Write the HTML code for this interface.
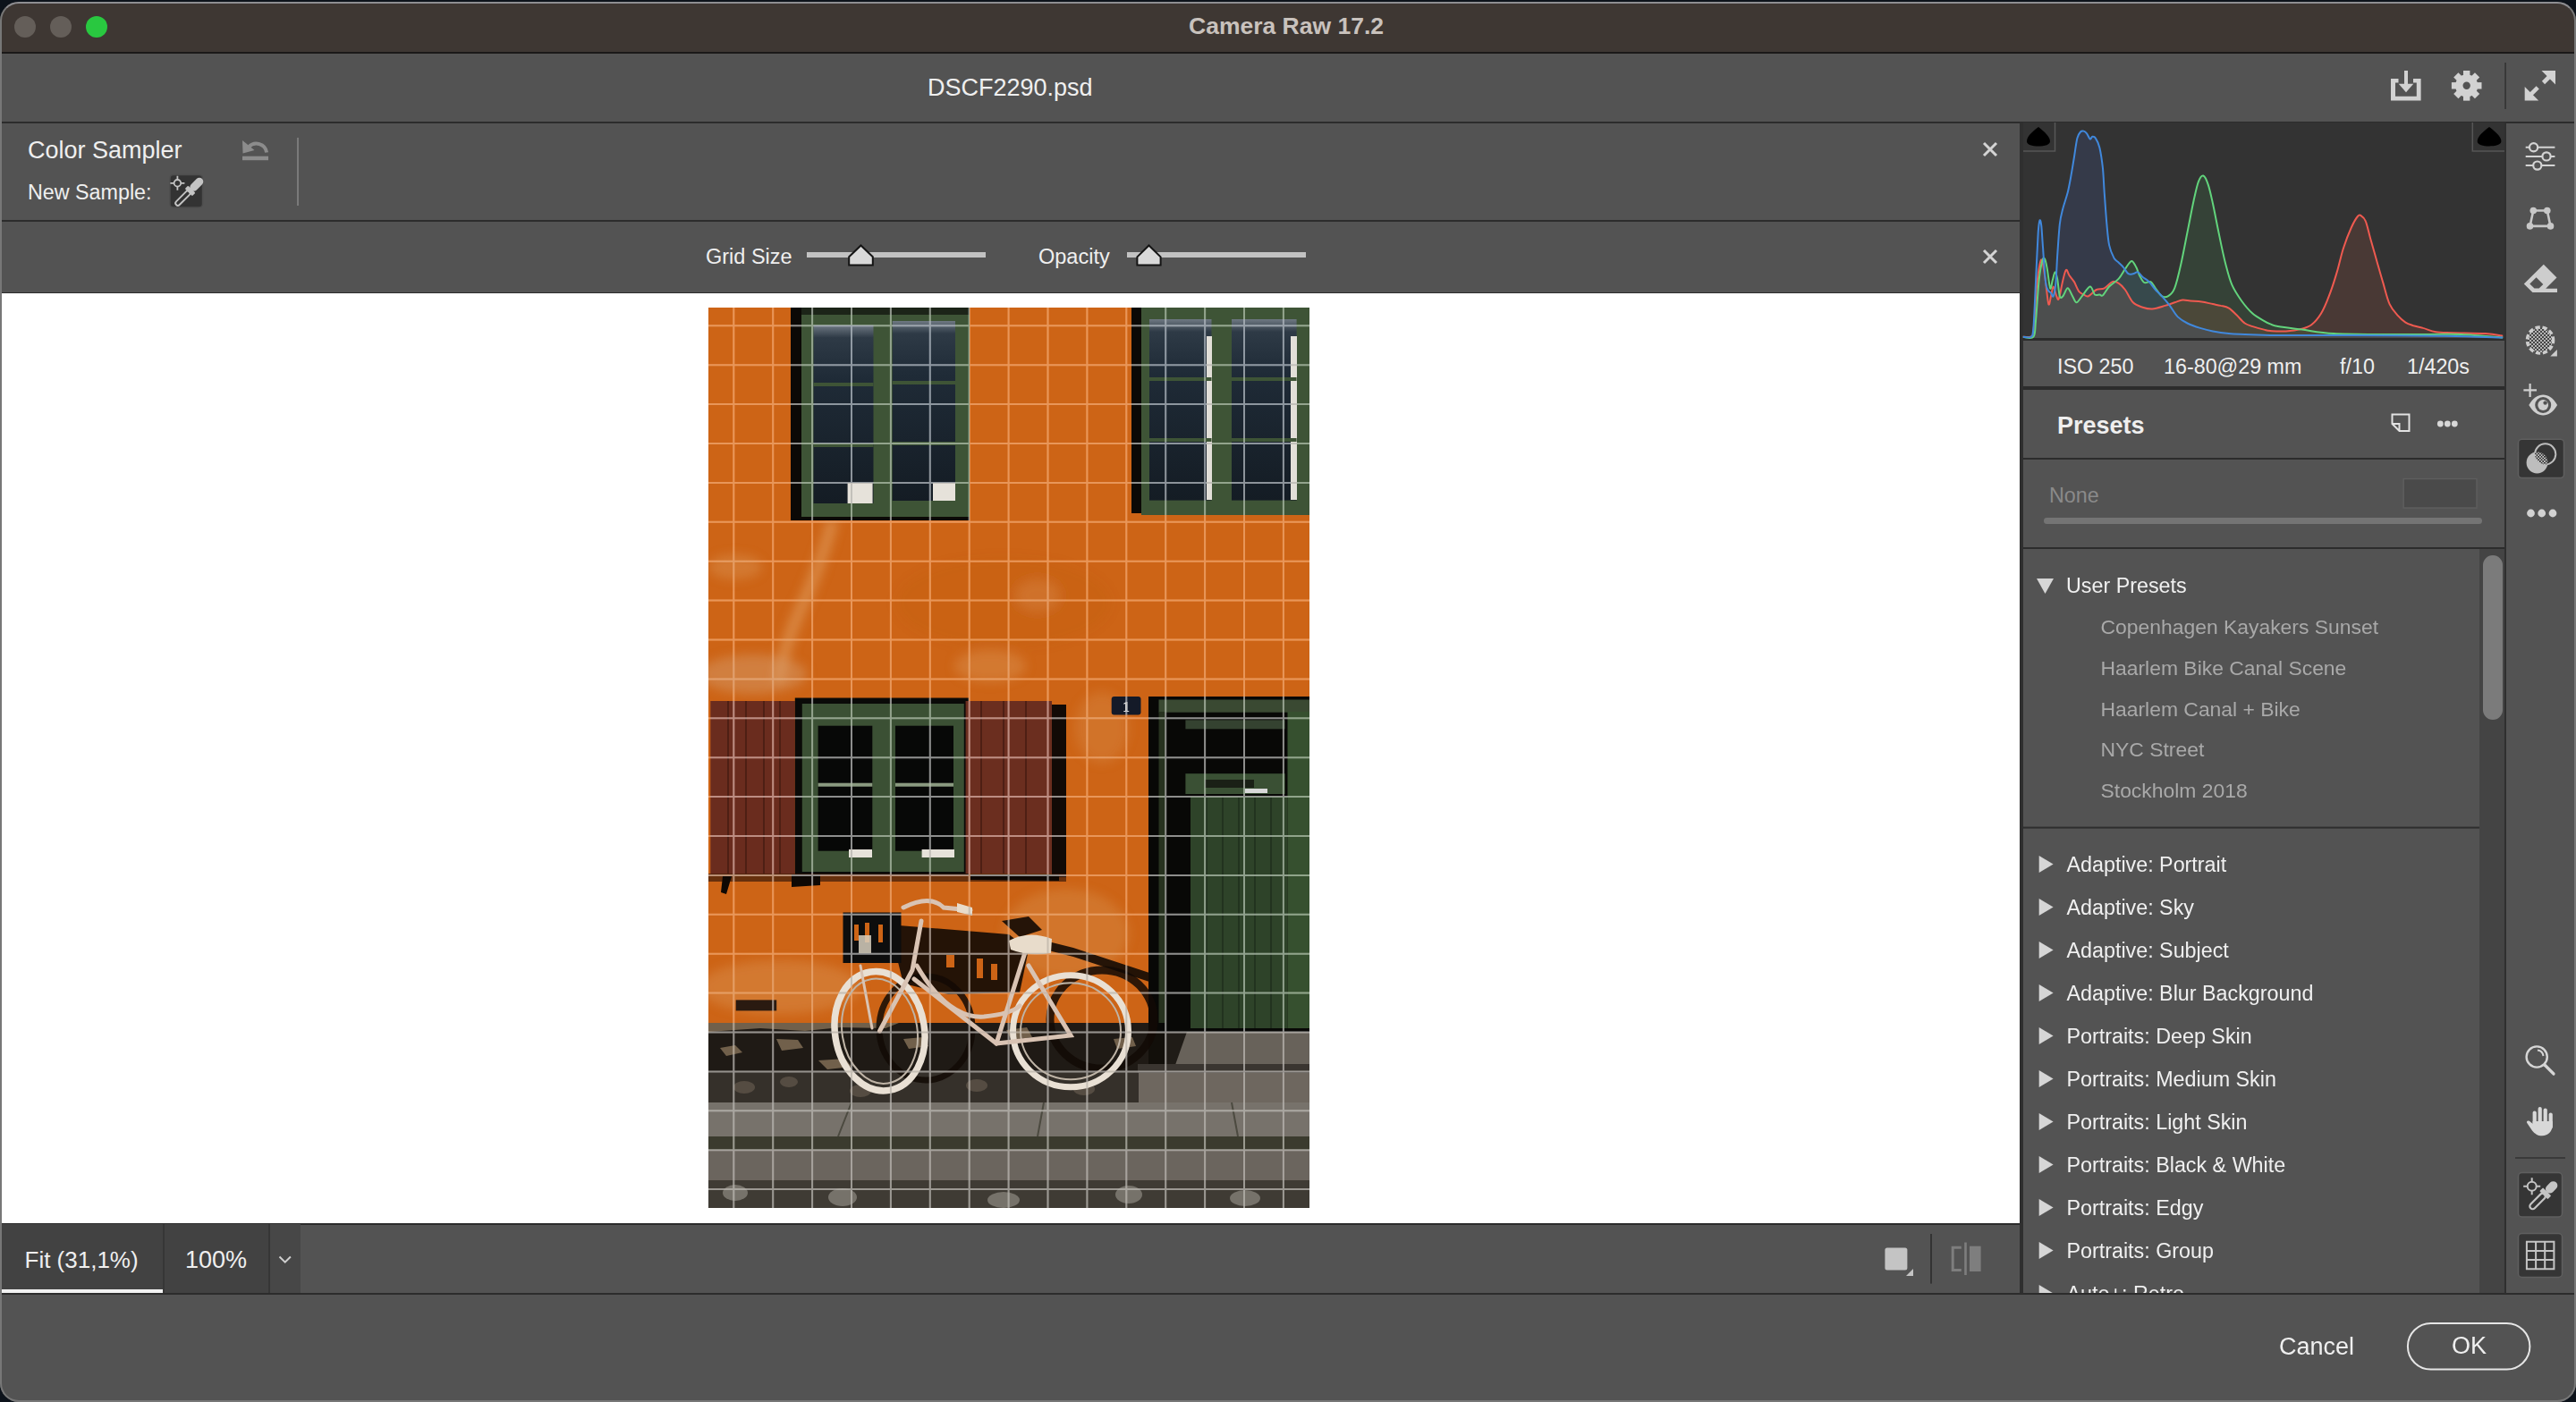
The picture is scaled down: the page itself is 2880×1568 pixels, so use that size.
<!DOCTYPE html>
<html><head><meta charset="utf-8">
<style>
*{box-sizing:border-box;margin:0;padding:0}
html,body{width:2880px;height:1568px;overflow:hidden;background:#535353;font-family:"Liberation Sans",sans-serif;position:relative}
.a{position:absolute}
.t{position:absolute;white-space:pre;line-height:1;color:#efefef}
#frame{position:absolute;left:0;top:2px;width:2880px;height:1566px;border-radius:21px;border:2px solid #777;border-top-color:#8e8e92;box-shadow:0 0 0 80px #0d131b;z-index:50;pointer-events:none}
.ln{position:absolute;background:#2c2c2c}
.ps{font-size:23.3px;color:#f0f0f0}
.pu{font-size:22.9px;color:#a9a9a9}
</style></head><body>
<!-- title bar -->
<div class="a" style="left:0;top:0;width:2880px;height:58px;background:#3e3733"></div>
<div class="a" style="left:0;top:58px;width:2880px;height:1.5px;background:#1b1918"></div>
<div class="a" style="left:16px;top:18px;width:24px;height:24px;border-radius:50%;background:#645e59"></div>
<div class="a" style="left:56px;top:18px;width:24px;height:24px;border-radius:50%;background:#645e59"></div>
<div class="a" style="left:96px;top:18px;width:24px;height:24px;border-radius:50%;background:#29c840"></div>
<div class="t" style="left:1329px;top:15.8px;font-size:26.5px;font-weight:700;color:#c9c2bd">Camera Raw 17.2</div>

<!-- header bar -->
<div class="ln" style="left:0;top:136px;width:2880px;height:1.5px"></div>
<div class="t" style="left:1037px;top:85px;font-size:27px">DSCF2290.psd</div>

<!-- color sampler bar -->
<div class="ln" style="left:0;top:246px;width:2258px;height:1.5px"></div>
<div class="t" style="left:31px;top:155px;font-size:27px">Color Sampler</div>
<div class="t" style="left:31px;top:204px;font-size:23.3px">New Sample:</div>
<div class="a" style="left:332px;top:154px;width:2px;height:76px;background:#7a7a7a"></div>

<!-- grid bar -->
<div class="ln" style="left:0;top:327px;width:2258px;height:1px"></div>
<div class="t" style="left:789px;top:276px;font-size:23.5px">Grid Size</div>
<div class="t" style="left:1161px;top:276px;font-size:23.5px">Opacity</div>

<!-- canvas -->
<div class="a" style="left:0;top:328px;width:2258px;height:1040px;background:#fff"></div>
<div class="ln" style="left:0;top:1368px;width:2258px;height:1.5px"></div>

<!-- zoom bar -->
<div class="ln" style="left:0;top:1446px;width:2880px;height:1.5px"></div>
<div class="a" style="left:2px;top:1369px;width:180px;height:77px;background:#424242"></div>
<div class="a" style="left:2px;top:1442px;width:180px;height:4px;background:#f2f2f2"></div>
<div class="a" style="left:182px;top:1369px;width:2px;height:77px;background:#363636"></div>
<div class="a" style="left:184px;top:1369px;width:116px;height:77px;background:#424242"></div>
<div class="a" style="left:300px;top:1369px;width:2px;height:77px;background:#363636"></div>
<div class="a" style="left:302px;top:1369px;width:34px;height:77px;background:#474747"></div>
<div class="t" style="left:27.5px;top:1396px;font-size:26px">Fit (31,1%)</div>
<div class="t" style="left:207px;top:1396px;font-size:27px">100%</div>

<!-- right panel separators -->
<div class="a" style="left:2258px;top:137px;width:4px;height:1310px;background:#2f2f2f"></div>
<div class="a" style="left:2800px;top:137px;width:2px;height:1310px;background:#2f2f2f"></div>

<!-- histogram -->
<div class="a" style="left:2262px;top:137px;width:538px;height:241px;background:#333"></div>
<div class="ln" style="left:2262px;top:378px;width:538px;height:3px"></div>
<div class="ln" style="left:2262px;top:432px;width:538px;height:4px"></div>
<div class="t" style="left:2300px;top:399px;font-size:23.3px">ISO 250</div>
<div class="t" style="left:2419px;top:399px;font-size:23.3px">16-80@29 mm</div>
<div class="t" style="left:2616px;top:399px;font-size:23.3px">f/10</div>
<div class="t" style="left:2691px;top:399px;font-size:23.3px">1/420s</div>

<!-- presets -->
<div class="t" style="left:2300px;top:462.5px;font-size:27px;font-weight:700">Presets</div>
<div class="ln" style="left:2262px;top:512px;width:538px;height:2px"></div>
<div class="t" style="left:2291px;top:543px;font-size:23.3px;color:#8a8a8a">None</div>
<div class="ln" style="left:2262px;top:612px;width:538px;height:2px"></div>

<!--PHOTO-->
<svg class="a" style="left:792px;top:344px" width="672" height="1007" viewBox="0 0 672 1007">
<defs>
<radialGradient id="lp" cx="0.5" cy="0.5" r="0.5"><stop offset="0" stop-color="#e0a060" stop-opacity="0.55"/><stop offset="1" stop-color="#e0a060" stop-opacity="0"/></radialGradient>
<radialGradient id="dp" cx="0.5" cy="0.5" r="0.5"><stop offset="0" stop-color="#9a4a10" stop-opacity="0.35"/><stop offset="1" stop-color="#9a4a10" stop-opacity="0"/></radialGradient>
<filter id="bl" x="-50%" y="-50%" width="200%" height="200%"><feGaussianBlur stdDeviation="6"/></filter>
<linearGradient id="glass" x1="0" y1="0" x2="0" y2="1"><stop offset="0" stop-color="#6e7882"/><stop offset="0.07" stop-color="#2e3a46"/><stop offset="0.3" stop-color="#1f2b37"/><stop offset="1" stop-color="#141c24"/></linearGradient>
</defs>
<!-- wall -->
<rect width="672" height="1007" fill="#cd6416"/>
<g filter="url(#bl)">
<path d="M139 238Q125 290 104 335Q84 378 78 420" stroke="#e4a468" stroke-width="13" fill="none" opacity="0.55"/>
<ellipse cx="30" cy="290" rx="30" ry="14" fill="#e0a064" opacity="0.35"/>
<ellipse cx="80" cy="760" rx="90" ry="30" fill="#e0a064" opacity="0.35"/>
<ellipse cx="400" cy="700" rx="70" ry="50" fill="#e0a064" opacity="0.28"/>
<ellipse cx="440" cy="470" rx="30" ry="40" fill="#e0a064" opacity="0.25"/>
<ellipse cx="50" cy="410" rx="60" ry="22" fill="#d8a070" opacity="0.45"/>
<ellipse cx="315" cy="401" rx="40" ry="18" fill="#e0a064" opacity="0.35"/>
<ellipse cx="368" cy="322" rx="25" ry="18" fill="#e0a064" opacity="0.3"/>
<ellipse cx="330" cy="330" rx="120" ry="50" fill="#b2520e" opacity="0.12"/>
</g>
<!-- top window 1 -->
<rect x="92" y="0" width="200" height="238" fill="#0b0906"/>
<rect x="104" y="0" width="188" height="234" fill="#3e5436"/>
<rect x="117.5" y="19.7" width="67" height="199.3" fill="url(#glass)"/>
<rect x="205.7" y="15" width="70.3" height="201" fill="url(#glass)"/>
<rect x="117.5" y="84" width="67" height="4" fill="#3e5436"/>
<rect x="117.5" y="152" width="67" height="4" fill="#3e5436"/>
<rect x="205.7" y="82" width="70.3" height="4" fill="#3e5436"/>
<rect x="205.7" y="150" width="70.3" height="4" fill="#3e5436"/>
<rect x="155.6" y="196" width="28" height="23" fill="#e6e2da"/>
<rect x="251" y="196" width="25" height="20" fill="#e6e2da"/>
<rect x="104" y="0" width="188" height="8" fill="#1c2418"/>
<!-- top window 2 -->
<rect x="473" y="0" width="199" height="230" fill="#0b0906"/>
<rect x="484" y="0" width="188" height="232" fill="#3e5436"/>
<rect x="493" y="13" width="69.5" height="202.6" fill="url(#glass)"/>
<rect x="585" y="13" width="72.6" height="202.6" fill="url(#glass)"/>
<rect x="557" y="32" width="6" height="183" fill="#e2dfd8"/>
<rect x="651" y="32" width="7" height="183" fill="#e2dfd8"/>
<rect x="493" y="78" width="69.5" height="4" fill="#3e5436"/>
<rect x="493" y="146" width="69.5" height="4" fill="#3e5436"/>
<rect x="585" y="78" width="72.6" height="4" fill="#3e5436"/>
<rect x="585" y="146" width="72.6" height="4" fill="#3e5436"/>
<!-- middle window -->
<rect x="2.3" y="440" width="94.5" height="193.6" fill="#6a2c1e"/>
<path d="M22 440V633M42 440V633M62 440V633M80 440V633" stroke="#4e1f14" stroke-width="2"/>
<rect x="96.8" y="436.5" width="194.2" height="198.5" fill="#0a0a08"/>
<rect x="104.8" y="443" width="181" height="188" fill="#3b5034"/>
<rect x="122.6" y="467.7" width="60.7" height="140" fill="#070807"/>
<rect x="209" y="467.7" width="65" height="140" fill="#070807"/>
<rect x="122.6" y="531.7" width="60.7" height="4" fill="#8a9a80"/>
<rect x="209" y="531.7" width="65" height="4" fill="#8a9a80"/>
<rect x="157" y="606" width="26" height="9" fill="#e6e2da"/>
<rect x="238.6" y="606" width="36.4" height="9" fill="#e6e2da"/>
<rect x="287.6" y="440" width="96.4" height="193" fill="#6b2e1f"/>
<path d="M305 440V633M330 440V633M355 440V633" stroke="#4e1f14" stroke-width="2"/>
<path d="M384 444H400V637H384Z" fill="#120a06"/>
<path d="M0 633H400V642H0Z" fill="#3a1a0a" opacity="0.7"/>
<!-- plaque -->
<rect x="450.7" y="435" width="32.8" height="20.6" rx="3" fill="#141a28"/>
<text x="467" y="452" font-family="Liberation Serif" font-weight="700" font-size="16" fill="#f2f2f2" text-anchor="middle">1</text>
<!-- door -->
<rect x="492" y="435" width="180" height="405" fill="#080806"/>
<rect x="503.5" y="438.5" width="168.5" height="14.2" fill="#3a4932"/>
<rect x="503.5" y="452" width="7" height="354" fill="#27321f"/>
<rect x="533.4" y="461.3" width="111.2" height="10" fill="#344230"/>
<rect x="533.4" y="521.2" width="111.2" height="22.8" fill="#3a5034"/>
<rect x="555" y="528" width="55" height="9" fill="#1a2016"/>
<rect x="539" y="547" width="108.5" height="259" fill="#2e4329"/>
<path d="M557 547V806M575 547V806M593 547V806M611 547V806M629 547V806" stroke="#22331f" stroke-width="2"/>
<rect x="647.5" y="452" width="24.5" height="354" fill="#36502f"/>
<rect x="600" y="538" width="25" height="5" fill="#d8d8d8"/>
<!-- base -->
<path d="M93.0 634.0 125.0 634.0 125.0 646.0 93.0 648.0Z M293.0 634.0 392.0 634.0 392.0 641.0 293.0 640.0Z M16.0 636.0 26.0 636.0 20.0 656.0 14.0 654.0Z" fill="#0e0804"/>
<rect x="30.7" y="774.4" width="45.5" height="12" fill="#2a1a10"/>

<rect x="0" y="800" width="492" height="59" fill="#1f1a15"/>
<g fill="#a89070" opacity="0.6">
 <path d="M0.0 800.0 213.0 800.0 198.0 806.0 148.0 805.0 108.0 809.0 58.0 806.0 0.0 810.0Z"/>
 <path d="M13.0 828.0 30.0 825.0 38.0 833.0 20.0 837.0Z"/>
 <path d="M76.0 818.0 100.0 819.0 106.0 828.0 82.0 831.0Z"/>
 <path d="M123.0 842.0 153.0 840.0 160.0 849.0 133.0 852.0Z"/>
 <path d="M218.0 818.0 240.0 816.0 246.0 826.0 224.0 829.0Z"/>
 <path d="M333.0 808.0 356.0 805.0 362.0 816.0 339.0 819.0Z"/>
 <path d="M453.0 818.0 474.0 816.0 478.0 826.0 457.0 829.0Z"/>
</g>
<rect x="492" y="800" width="36" height="50" fill="#080806"/>
<rect x="511" y="810" width="161" height="37.5" fill="#68625a"/><path d="M492 810H535L522 847H492Z" fill="#14100c" opacity="0.85"/><rect x="480" y="846" width="192" height="11" fill="#3a3530"/>
<rect x="480" y="856" width="192" height="34" fill="#6e675f"/>
<rect x="0" y="855.5" width="481" height="34" fill="#35302a"/>
<g fill="#5e5448" opacity="0.8"><ellipse cx="40" cy="872" rx="12" ry="7"/><ellipse cx="90" cy="866" rx="10" ry="6"/><ellipse cx="170" cy="876" rx="12" ry="7"/><ellipse cx="300" cy="870" rx="12" ry="7"/><ellipse cx="420" cy="874" rx="12" ry="7"/></g>
<rect x="0" y="889" width="672" height="38.5" fill="#77726b"/>
<path d="M160 889L145 927M375 889L368 927M585 889L592 927" stroke="#4c4a40" stroke-width="2"/>
<rect x="0" y="927" width="672" height="15.5" fill="#3b3b2e"/>
<rect x="0" y="942" width="672" height="34.5" fill="#6b655e"/>
<rect x="0" y="976" width="672" height="31" fill="#3f3b34"/>
<g fill="#76726a"><ellipse cx="30" cy="990" rx="14" ry="9"/><ellipse cx="150" cy="995" rx="16" ry="10"/><ellipse cx="330" cy="998" rx="18" ry="9"/><ellipse cx="470" cy="992" rx="15" ry="10"/><ellipse cx="600" cy="996" rx="17" ry="9"/></g>
<!-- bike shadow -->
<g fill="#120a05" opacity="0.9">
 <path d="M213.0 691.0 336.0 701.0 358.0 718.0 348.0 766.0 268.0 768.0 218.0 756.0 208.0 716.0Z"/>
 <path d="M348.0 701.0 408.0 716.0 493.0 744.0 493.0 754.0 408.0 726.0 348.0 711.0Z"/>
 <path d="M328.0 686.0 358.0 681.0 373.0 696.0 348.0 704.0Z"/>
</g>
<g fill="#cd6416"><rect x="266" y="724" width="9" height="14"/><rect x="300" y="728" width="7" height="22"/><rect x="316" y="734" width="7" height="18"/></g>
<g fill="none" stroke="#120a05" opacity="0.85">
 <ellipse cx="440" cy="796" rx="58" ry="55" stroke-width="9"/>
 <ellipse cx="243" cy="806" rx="52" ry="58" stroke-width="7"/>
</g>
<!-- bike -->
<g fill="none">
 <ellipse cx="191.5" cy="809.2" rx="50" ry="67" stroke="#e9e0d4" stroke-width="7.5" transform="rotate(-9 191.5 809.2)"/>
 <ellipse cx="191.5" cy="809.2" rx="42" ry="59" stroke="#bfb4a6" stroke-width="2" transform="rotate(-9 191.5 809.2)"/>
 <ellipse cx="405" cy="809.3" rx="64.5" ry="62.5" stroke="#e9e0d4" stroke-width="7"/>
 <ellipse cx="405" cy="809.3" rx="56" ry="54" stroke="#bfb4a6" stroke-width="2"/>
</g>
<g fill="none" stroke="#d9c3b3" stroke-width="5" stroke-linecap="round">
 <path d="M238.0 686.0 228.0 741.0 191.5 809.0"/>
 <path d="M233.0 736.0 Q268.0 796.0 308.0 793.0 Q338.0 790.0 348.0 781.0"/>
 <path d="M230.0 751.0 322.0 823.0"/>
 <path d="M322.0 823.0 355.0 718.0"/>
 <path d="M322.0 823.0 405.0 814.0 358.0 736.0"/>
 <path d="M218.0 671.0 Q248.0 656.0 263.0 671.0 L293.0 674.0"/>
 <path d="M170.0 736.0 183.0 806.0" stroke-width="3"/>
</g>
<path d="M278.0 666.0 295.0 671.0 295.0 680.0 278.0 676.0Z" fill="#e8dccb"/>
<path d="M336.0 708.0 Q358.0 696.0 384.0 706.0 L383.0 722.0 Q358.0 726.0 338.0 718.0Z" fill="#e8dccb"/>
<rect x="150.5" y="676.5" width="65" height="56.5" fill="#0d0d0d"/>
<g fill="#cd6416"><rect x="163" y="690" width="5" height="18"/><rect x="175" y="688" width="5" height="22"/><rect x="190" y="690" width="5" height="20"/></g>
<rect x="168" y="702" width="14" height="20" fill="#d8d0c0" opacity="0.85"/>
<!-- grid -->
<path d="M28.3 0V1007 M72.2 0V1007 M116.1 0V1007 M160.0 0V1007 M203.9 0V1007 M247.8 0V1007 M291.7 0V1007 M335.6 0V1007 M379.5 0V1007 M423.4 0V1007 M467.3 0V1007 M511.2 0V1007 M555.1 0V1007 M599.0 0V1007 M642.9 0V1007 M0 20.3H672 M0 64.2H672 M0 108.1H672 M0 152.0H672 M0 195.9H672 M0 239.8H672 M0 283.7H672 M0 327.6H672 M0 371.5H672 M0 415.4H672 M0 459.3H672 M0 503.2H672 M0 547.1H672 M0 591.0H672 M0 634.9H672 M0 678.8H672 M0 722.7H672 M0 766.6H672 M0 810.5H672 M0 854.4H672 M0 898.3H672 M0 942.2H672 M0 986.1H672" stroke="rgba(255,255,255,0.22)" stroke-width="2" fill="none"/>
<path d="M28.3 0V1007 M72.2 0V1007 M116.1 0V1007 M160.0 0V1007 M203.9 0V1007 M247.8 0V1007 M291.7 0V1007 M335.6 0V1007 M379.5 0V1007 M423.4 0V1007 M467.3 0V1007 M511.2 0V1007 M555.1 0V1007 M599.0 0V1007 M642.9 0V1007 M0 20.3H672 M0 64.2H672 M0 108.1H672 M0 152.0H672 M0 195.9H672 M0 239.8H672 M0 283.7H672 M0 327.6H672 M0 371.5H672 M0 415.4H672 M0 459.3H672 M0 503.2H672 M0 547.1H672 M0 591.0H672 M0 634.9H672 M0 678.8H672 M0 722.7H672 M0 766.6H672 M0 810.5H672 M0 854.4H672 M0 898.3H672 M0 942.2H672 M0 986.1H672" stroke="rgb(175,175,175)" stroke-opacity="0.7" stroke-width="2" fill="none" style="mix-blend-mode:luminosity"/>
</svg>
<!--/PHOTO-->
<!--SVG1-->
<svg class="a" style="left:0;top:0" width="2880" height="1568" viewBox="0 0 2880 1568">
<defs>
<pattern id="chk" width="4" height="4" patternUnits="userSpaceOnUse"><rect width="4" height="4" fill="#222"/><rect width="2" height="2" fill="#d0d0d0"/><rect x="2" y="2" width="2" height="2" fill="#d0d0d0"/></pattern>
<pattern id="chk2" width="3.4" height="3.4" patternUnits="userSpaceOnUse"><rect width="3.4" height="3.4" fill="#3a3a3a"/><rect width="1.7" height="1.7" fill="#c8c8c8"/><rect x="1.7" y="1.7" width="1.7" height="1.7" fill="#c8c8c8"/></pattern>
</defs>
<!-- header icons -->
<g fill="#d2d2d2">
 <path d="M2673 88H2681.5V92.5H2678V107.8H2701.8V92.5H2698V88H2706.6V112.4H2673Z"/>
 <rect x="2688" y="79" width="4" height="16"/>
 <path d="M2681.7 93.8H2698.3L2690 103.2Z"/>
 <g transform="translate(2757.7 95.8)"><circle r="12.6"/><rect x="-3.7" y="-16.8" width="7.4" height="33.6"/><rect x="-3.7" y="-16.8" width="7.4" height="33.6" transform="rotate(45)"/><rect x="-3.7" y="-16.8" width="7.4" height="33.6" transform="rotate(90)"/><rect x="-3.7" y="-16.8" width="7.4" height="33.6" transform="rotate(135)"/><circle r="4.2" fill="#535353"/></g>
 <path d="M2857 79V94.5L2841.5 79Z"/><path d="M2851 85L2843.5 92.5" stroke="#d2d2d2" stroke-width="4.6"/>
 <path d="M2822.7 112.4V96.9L2838.2 112.4Z"/><path d="M2828.7 106.4L2837.2 97.9" stroke="#d2d2d2" stroke-width="4.6"/>
</g>
<rect x="2800.3" y="70" width="1.6" height="52" fill="#333"/>
<!-- undo icon -->
<path d="M278 164.5A11.6 11.6 0 0 1 298.1 170.5" fill="none" stroke="#8c8c8c" stroke-width="4"/>
<path d="M271 157L271.5 171.5L284.5 168Z" fill="#8c8c8c"/>
<rect x="271" y="174.7" width="29" height="4.5" fill="#8c8c8c"/>
<!-- eyedropper box -->
<rect x="190" y="195.5" width="36.5" height="36.5" rx="4" fill="#333" stroke="#4e4e4e" stroke-width="1.5"/>
<g stroke="#c4c4c4" fill="none" stroke-width="1.8">
 <circle cx="198.4" cy="204.8" r="3.8"/>
 <path d="M198.4 196.8V200.5M198.4 209.1V212.8M190.4 204.8H194.1M202.7 204.8H206.4"/>
</g>
<g transform="translate(211.5 214.5) rotate(-45)">
 <rect x="-20.5" y="-2.6" width="21" height="5.2" rx="2.6" fill="none" stroke="#c4c4c4" stroke-width="1.9"/>
 <rect x="-1" y="-5.8" width="5" height="11.6" rx="1" fill="#c4c4c4"/>
 <rect x="3" y="-4.4" width="17.5" height="8.8" rx="4.4" fill="#c4c4c4"/>
</g>
<!-- sliders -->
<rect x="902" y="282" width="200" height="6" fill="#c2c2c2"/>
<path d="M962.5 274.5L975.8 287.3V296.5H949.2V287.3Z" fill="#d9d9d9" stroke="#141414" stroke-width="2"/>
<rect x="1260" y="282" width="200" height="6" fill="#c2c2c2"/>
<path d="M1284.5 274.5L1297.6 287.3V296.5H1271.4V287.3Z" fill="#d9d9d9" stroke="#141414" stroke-width="2"/>
<!-- close X -->
<g stroke="#d4d4d4" stroke-width="3"><path d="M2218 160L2232 174M2232 160L2218 174"/><path d="M2218 280L2232 294M2232 280L2218 294"/></g>
<!-- histogram -->
<g transform="translate(2262 137)">
 <path d="M-0.2 239.7 C1.1 239.7 5.9 240.7 7.8 239.7 C9.7 238.6 10.2 242.5 11.4 233.4 C12.6 224.4 13.8 197.8 14.9 185.3 C16.1 172.8 17.5 163.6 18.5 158.5 C19.6 153.5 20.1 152.0 21.2 154.9 C22.2 157.9 23.6 168.3 24.8 176.3 C25.9 184.4 27.3 200.1 28.3 203.1 C29.4 206.1 30.1 197.5 31.0 194.2 C31.9 190.9 32.6 183.5 33.7 183.5 C34.7 183.5 36.2 192.0 37.2 194.2 C38.3 196.4 38.7 199.8 39.9 196.9 C41.1 193.9 43.0 181.7 44.4 176.3 C45.7 171.0 46.7 165.6 47.9 164.8 C49.1 163.9 50.0 168.8 51.5 171.0 C53.0 173.2 55.1 175.2 56.9 178.1 C58.6 181.1 60.4 186.5 62.2 188.8 C64.0 191.2 65.8 191.5 67.6 192.4 C69.3 193.3 70.5 195.1 72.9 194.2 C75.3 193.3 78.9 188.5 81.8 187.0 C84.8 185.6 87.8 186.8 90.7 185.3 C93.7 183.8 97.0 179.0 99.7 178.1 C102.3 177.2 104.4 178.4 106.8 179.9 C109.2 181.4 111.3 183.5 113.9 187.0 C116.6 190.6 119.6 198.0 122.8 201.3 C126.1 204.6 130.0 205.5 133.5 206.7 C137.1 207.9 140.1 208.7 144.2 208.5 C148.4 208.2 154.4 206.1 158.5 204.9 C162.7 203.7 165.9 202.4 169.2 201.3 C172.5 200.3 175.2 198.9 178.1 198.6 C181.1 198.3 183.5 199.2 187.0 199.5 C190.6 199.8 195.4 199.8 199.5 200.4 C203.7 201.0 208.5 202.4 212.0 203.1 C215.6 203.8 218.0 204.1 220.9 204.9 C223.9 205.6 226.9 205.8 229.9 207.6 C232.8 209.3 235.8 212.8 238.8 215.6 C241.7 218.4 244.7 222.4 247.7 224.5 C250.7 226.6 253.0 226.9 256.6 228.1 C260.2 229.3 265.8 230.8 269.1 231.6 C272.4 232.5 272.1 232.8 276.2 233.1 C280.3 233.4 287.8 233.8 293.7 233.4 C299.5 233.0 306.7 231.9 311.5 230.7 C316.3 229.6 318.6 229.1 322.2 226.3 C325.8 223.5 329.6 219.2 332.9 213.8 C336.2 208.5 338.9 201.9 341.8 194.2 C344.8 186.5 348.1 176.3 350.7 167.4 C353.4 158.5 355.2 149.0 357.9 140.7 C360.6 132.4 364.1 123.4 366.8 117.5 C369.5 111.5 372.1 107.2 373.9 105.0 C375.7 102.8 376.0 103.2 377.5 104.1 C379.0 105.0 381.1 106.0 382.8 110.4 C384.6 114.7 386.1 122.5 388.2 130.0 C390.3 137.4 393.0 146.6 395.3 154.9 C397.7 163.3 400.1 171.9 402.5 179.9 C404.8 187.9 406.9 197.2 409.6 203.1 C412.3 209.0 415.5 212.2 418.5 215.6 C421.5 219.0 424.5 221.7 427.4 223.6 C430.4 225.5 433.1 226.1 436.3 227.2 C439.6 228.2 442.9 228.7 447.0 229.9 C451.2 231.0 455.7 233.4 461.3 234.3 C467.0 235.2 471.7 234.9 480.9 235.2 C490.2 235.5 507.4 235.5 516.6 236.1 C525.8 236.7 533.0 238.3 536.2 238.8 L536.2 241 L0 241Z" fill="rgb(28,7,3)" style="mix-blend-mode:screen"/>
 <path d="M-0.2 239.7 C1.7 239.7 9.0 242.8 11.4 239.7 C13.8 236.5 13.0 231.5 14.1 220.9 C15.1 210.4 16.4 187.3 17.6 176.3 C18.8 165.4 20.1 159.0 21.2 154.9 C22.2 150.9 23.0 151.1 23.9 152.3 C24.8 153.5 25.5 156.6 26.5 162.1 C27.6 167.6 29.1 182.9 30.1 185.3 C31.1 187.6 31.9 179.3 32.8 176.3 C33.7 173.4 34.6 167.7 35.5 167.4 C36.3 167.1 37.2 170.1 38.1 174.6 C39.0 179.0 39.8 190.9 40.8 194.2 C41.8 197.5 42.9 195.7 44.4 194.2 C45.9 192.7 47.9 185.3 49.7 185.3 C51.5 185.3 53.4 191.5 55.1 194.2 C56.7 196.9 57.7 201.3 59.5 201.3 C61.3 201.3 63.2 197.2 65.8 194.2 C68.3 191.2 72.3 183.8 74.7 183.5 C77.1 183.2 78.3 190.9 80.0 192.4 C81.8 193.9 83.9 192.3 85.4 192.4 C86.9 192.5 87.2 194.8 89.0 193.3 C90.7 191.8 93.1 186.6 96.1 183.5 C99.1 180.4 103.8 177.8 106.8 174.6 C109.8 171.3 111.5 167.1 113.9 163.9 C116.3 160.6 119.0 155.2 121.1 154.9 C123.1 154.6 124.9 159.4 126.4 162.1 C127.9 164.8 128.5 168.2 130.0 171.0 C131.5 173.8 133.2 177.8 135.3 179.0 C137.4 180.2 140.4 177.1 142.5 178.1 C144.5 179.2 145.7 182.6 147.8 185.3 C149.9 187.9 152.6 192.7 154.9 194.2 C157.3 195.7 159.7 195.7 162.1 194.2 C164.5 192.7 166.8 191.2 169.2 185.3 C171.6 179.3 174.0 168.9 176.3 158.5 C178.7 148.1 181.1 134.7 183.5 122.8 C185.9 111.0 188.5 96.7 190.6 87.2 C192.7 77.7 194.2 70.4 196.0 65.8 C197.8 61.2 199.5 58.9 201.3 59.5 C203.1 60.1 204.9 64.1 206.7 69.3 C208.5 74.5 209.9 81.2 212.0 90.7 C214.1 100.3 216.8 115.1 219.2 126.4 C221.5 137.7 223.9 149.3 226.3 158.5 C228.7 167.7 230.4 174.9 233.4 181.7 C236.4 188.5 240.3 194.2 244.1 199.5 C248.0 204.9 252.4 210.1 256.6 213.8 C260.8 217.5 265.8 219.9 269.1 221.8 C272.4 223.8 273.6 224.4 276.2 225.4 C278.8 226.4 278.9 227.0 284.8 228.1 C290.6 229.1 301.1 230.3 311.5 231.6 C321.9 233.0 332.3 235.2 347.2 236.1 C362.0 237.0 382.8 236.8 400.7 237.0 C418.5 237.1 439.3 237.0 454.2 237.0 C469.0 237.0 476.2 236.4 489.9 237.0 C503.5 237.6 528.5 240.0 536.2 240.6 L536.2 241 L0 241Z" fill="rgb(3,19,5)" style="mix-blend-mode:screen"/>
 <path d="M-0.2 239.7 C1.3 239.7 6.8 241.3 8.7 239.7 C10.6 238.0 10.5 240.4 11.4 229.9 C12.3 219.3 13.2 194.2 14.1 176.3 C14.9 158.5 16.0 134.0 16.7 122.8 C17.5 111.7 17.9 110.7 18.5 109.5 C19.1 108.3 19.7 110.5 20.3 115.7 C20.9 120.9 21.3 130.6 22.1 140.7 C22.8 150.8 23.9 168.6 24.8 176.3 C25.6 184.1 26.4 184.7 27.4 187.0 C28.5 189.4 30.0 189.4 31.0 190.6 C32.0 191.8 32.8 196.0 33.7 194.2 C34.6 192.4 35.6 187.3 36.3 179.9 C37.1 172.5 37.4 160.6 38.1 149.6 C38.9 138.6 39.8 122.8 40.8 113.9 C41.8 105.0 42.9 102.0 44.4 96.1 C45.9 90.1 48.2 84.2 49.7 78.3 C51.2 72.3 52.1 67.0 53.3 60.4 C54.5 53.9 55.7 46.2 56.9 39.0 C58.0 31.9 59.2 22.4 60.4 17.6 C61.6 12.9 62.8 11.8 64.0 10.5 C65.2 9.1 66.4 9.3 67.6 9.6 C68.7 9.9 69.9 10.8 71.1 12.3 C72.3 13.8 73.6 17.9 74.7 18.5 C75.7 19.1 76.3 16.0 77.4 15.8 C78.4 15.7 79.6 15.5 80.9 17.6 C82.3 19.7 84.1 22.7 85.4 28.3 C86.7 34.0 88.1 43.2 89.0 51.5 C89.8 59.8 90.0 67.9 90.7 78.3 C91.5 88.7 92.5 104.1 93.4 113.9 C94.3 123.7 94.8 130.9 96.1 137.1 C97.4 143.4 99.7 148.1 101.4 151.4 C103.2 154.6 105.0 154.9 106.8 156.7 C108.6 158.5 110.4 160.0 112.1 162.1 C113.9 164.2 115.7 168.0 117.5 169.2 C119.3 170.4 121.1 169.5 122.8 169.2 C124.6 168.9 126.4 166.8 128.2 167.4 C130.0 168.0 131.5 171.0 133.5 172.8 C135.6 174.6 138.3 175.8 140.7 178.1 C143.1 180.5 145.4 184.4 147.8 187.0 C150.2 189.7 152.3 191.2 154.9 194.2 C157.6 197.2 160.9 201.0 163.9 204.9 C166.8 208.7 169.5 214.1 172.8 217.4 C176.1 220.6 179.3 222.4 183.5 224.5 C187.6 226.6 193.0 228.4 197.8 229.9 C202.5 231.3 206.7 232.4 212.0 233.4 C217.4 234.5 223.9 235.5 229.9 236.1 C235.8 236.7 240.0 236.7 247.7 237.0 C255.4 237.3 268.6 237.7 276.2 237.9 C283.9 238.0 278.9 237.9 293.7 237.9 C308.5 237.9 335.3 237.7 365.0 237.9 C394.7 238.0 443.5 238.3 472.0 238.8 C500.6 239.2 525.5 240.3 536.2 240.6 L536.2 241 L0 241Z" fill="rgb(2,9,27)" style="mix-blend-mode:screen"/>
 <path d="M-0.2 239.7 C1.1 239.7 5.9 240.7 7.8 239.7 C9.7 238.6 10.2 242.5 11.4 233.4 C12.6 224.4 13.8 197.8 14.9 185.3 C16.1 172.8 17.5 163.6 18.5 158.5 C19.6 153.5 20.1 152.0 21.2 154.9 C22.2 157.9 23.6 168.3 24.8 176.3 C25.9 184.4 27.3 200.1 28.3 203.1 C29.4 206.1 30.1 197.5 31.0 194.2 C31.9 190.9 32.6 183.5 33.7 183.5 C34.7 183.5 36.2 192.0 37.2 194.2 C38.3 196.4 38.7 199.8 39.9 196.9 C41.1 193.9 43.0 181.7 44.4 176.3 C45.7 171.0 46.7 165.6 47.9 164.8 C49.1 163.9 50.0 168.8 51.5 171.0 C53.0 173.2 55.1 175.2 56.9 178.1 C58.6 181.1 60.4 186.5 62.2 188.8 C64.0 191.2 65.8 191.5 67.6 192.4 C69.3 193.3 70.5 195.1 72.9 194.2 C75.3 193.3 78.9 188.5 81.8 187.0 C84.8 185.6 87.8 186.8 90.7 185.3 C93.7 183.8 97.0 179.0 99.7 178.1 C102.3 177.2 104.4 178.4 106.8 179.9 C109.2 181.4 111.3 183.5 113.9 187.0 C116.6 190.6 119.6 198.0 122.8 201.3 C126.1 204.6 130.0 205.5 133.5 206.7 C137.1 207.9 140.1 208.7 144.2 208.5 C148.4 208.2 154.4 206.1 158.5 204.9 C162.7 203.7 165.9 202.4 169.2 201.3 C172.5 200.3 175.2 198.9 178.1 198.6 C181.1 198.3 183.5 199.2 187.0 199.5 C190.6 199.8 195.4 199.8 199.5 200.4 C203.7 201.0 208.5 202.4 212.0 203.1 C215.6 203.8 218.0 204.1 220.9 204.9 C223.9 205.6 226.9 205.8 229.9 207.6 C232.8 209.3 235.8 212.8 238.8 215.6 C241.7 218.4 244.7 222.4 247.7 224.5 C250.7 226.6 253.0 226.9 256.6 228.1 C260.2 229.3 265.8 230.8 269.1 231.6 C272.4 232.5 272.1 232.8 276.2 233.1 C280.3 233.4 287.8 233.8 293.7 233.4 C299.5 233.0 306.7 231.9 311.5 230.7 C316.3 229.6 318.6 229.1 322.2 226.3 C325.8 223.5 329.6 219.2 332.9 213.8 C336.2 208.5 338.9 201.9 341.8 194.2 C344.8 186.5 348.1 176.3 350.7 167.4 C353.4 158.5 355.2 149.0 357.9 140.7 C360.6 132.4 364.1 123.4 366.8 117.5 C369.5 111.5 372.1 107.2 373.9 105.0 C375.7 102.8 376.0 103.2 377.5 104.1 C379.0 105.0 381.1 106.0 382.8 110.4 C384.6 114.7 386.1 122.5 388.2 130.0 C390.3 137.4 393.0 146.6 395.3 154.9 C397.7 163.3 400.1 171.9 402.5 179.9 C404.8 187.9 406.9 197.2 409.6 203.1 C412.3 209.0 415.5 212.2 418.5 215.6 C421.5 219.0 424.5 221.7 427.4 223.6 C430.4 225.5 433.1 226.1 436.3 227.2 C439.6 228.2 442.9 228.7 447.0 229.9 C451.2 231.0 455.7 233.4 461.3 234.3 C467.0 235.2 471.7 234.9 480.9 235.2 C490.2 235.5 507.4 235.5 516.6 236.1 C525.8 236.7 533.0 238.3 536.2 238.8" fill="none" stroke="#ef5a50" stroke-width="2"/>
 <path d="M-0.2 239.7 C1.7 239.7 9.0 242.8 11.4 239.7 C13.8 236.5 13.0 231.5 14.1 220.9 C15.1 210.4 16.4 187.3 17.6 176.3 C18.8 165.4 20.1 159.0 21.2 154.9 C22.2 150.9 23.0 151.1 23.9 152.3 C24.8 153.5 25.5 156.6 26.5 162.1 C27.6 167.6 29.1 182.9 30.1 185.3 C31.1 187.6 31.9 179.3 32.8 176.3 C33.7 173.4 34.6 167.7 35.5 167.4 C36.3 167.1 37.2 170.1 38.1 174.6 C39.0 179.0 39.8 190.9 40.8 194.2 C41.8 197.5 42.9 195.7 44.4 194.2 C45.9 192.7 47.9 185.3 49.7 185.3 C51.5 185.3 53.4 191.5 55.1 194.2 C56.7 196.9 57.7 201.3 59.5 201.3 C61.3 201.3 63.2 197.2 65.8 194.2 C68.3 191.2 72.3 183.8 74.7 183.5 C77.1 183.2 78.3 190.9 80.0 192.4 C81.8 193.9 83.9 192.3 85.4 192.4 C86.9 192.5 87.2 194.8 89.0 193.3 C90.7 191.8 93.1 186.6 96.1 183.5 C99.1 180.4 103.8 177.8 106.8 174.6 C109.8 171.3 111.5 167.1 113.9 163.9 C116.3 160.6 119.0 155.2 121.1 154.9 C123.1 154.6 124.9 159.4 126.4 162.1 C127.9 164.8 128.5 168.2 130.0 171.0 C131.5 173.8 133.2 177.8 135.3 179.0 C137.4 180.2 140.4 177.1 142.5 178.1 C144.5 179.2 145.7 182.6 147.8 185.3 C149.9 187.9 152.6 192.7 154.9 194.2 C157.3 195.7 159.7 195.7 162.1 194.2 C164.5 192.7 166.8 191.2 169.2 185.3 C171.6 179.3 174.0 168.9 176.3 158.5 C178.7 148.1 181.1 134.7 183.5 122.8 C185.9 111.0 188.5 96.7 190.6 87.2 C192.7 77.7 194.2 70.4 196.0 65.8 C197.8 61.2 199.5 58.9 201.3 59.5 C203.1 60.1 204.9 64.1 206.7 69.3 C208.5 74.5 209.9 81.2 212.0 90.7 C214.1 100.3 216.8 115.1 219.2 126.4 C221.5 137.7 223.9 149.3 226.3 158.5 C228.7 167.7 230.4 174.9 233.4 181.7 C236.4 188.5 240.3 194.2 244.1 199.5 C248.0 204.9 252.4 210.1 256.6 213.8 C260.8 217.5 265.8 219.9 269.1 221.8 C272.4 223.8 273.6 224.4 276.2 225.4 C278.8 226.4 278.9 227.0 284.8 228.1 C290.6 229.1 301.1 230.3 311.5 231.6 C321.9 233.0 332.3 235.2 347.2 236.1 C362.0 237.0 382.8 236.8 400.7 237.0 C418.5 237.1 439.3 237.0 454.2 237.0 C469.0 237.0 476.2 236.4 489.9 237.0 C503.5 237.6 528.5 240.0 536.2 240.6" fill="none" stroke="#62d47c" stroke-width="2"/>
 <path d="M-0.2 239.7 C1.3 239.7 6.8 241.3 8.7 239.7 C10.6 238.0 10.5 240.4 11.4 229.9 C12.3 219.3 13.2 194.2 14.1 176.3 C14.9 158.5 16.0 134.0 16.7 122.8 C17.5 111.7 17.9 110.7 18.5 109.5 C19.1 108.3 19.7 110.5 20.3 115.7 C20.9 120.9 21.3 130.6 22.1 140.7 C22.8 150.8 23.9 168.6 24.8 176.3 C25.6 184.1 26.4 184.7 27.4 187.0 C28.5 189.4 30.0 189.4 31.0 190.6 C32.0 191.8 32.8 196.0 33.7 194.2 C34.6 192.4 35.6 187.3 36.3 179.9 C37.1 172.5 37.4 160.6 38.1 149.6 C38.9 138.6 39.8 122.8 40.8 113.9 C41.8 105.0 42.9 102.0 44.4 96.1 C45.9 90.1 48.2 84.2 49.7 78.3 C51.2 72.3 52.1 67.0 53.3 60.4 C54.5 53.9 55.7 46.2 56.9 39.0 C58.0 31.9 59.2 22.4 60.4 17.6 C61.6 12.9 62.8 11.8 64.0 10.5 C65.2 9.1 66.4 9.3 67.6 9.6 C68.7 9.9 69.9 10.8 71.1 12.3 C72.3 13.8 73.6 17.9 74.7 18.5 C75.7 19.1 76.3 16.0 77.4 15.8 C78.4 15.7 79.6 15.5 80.9 17.6 C82.3 19.7 84.1 22.7 85.4 28.3 C86.7 34.0 88.1 43.2 89.0 51.5 C89.8 59.8 90.0 67.9 90.7 78.3 C91.5 88.7 92.5 104.1 93.4 113.9 C94.3 123.7 94.8 130.9 96.1 137.1 C97.4 143.4 99.7 148.1 101.4 151.4 C103.2 154.6 105.0 154.9 106.8 156.7 C108.6 158.5 110.4 160.0 112.1 162.1 C113.9 164.2 115.7 168.0 117.5 169.2 C119.3 170.4 121.1 169.5 122.8 169.2 C124.6 168.9 126.4 166.8 128.2 167.4 C130.0 168.0 131.5 171.0 133.5 172.8 C135.6 174.6 138.3 175.8 140.7 178.1 C143.1 180.5 145.4 184.4 147.8 187.0 C150.2 189.7 152.3 191.2 154.9 194.2 C157.6 197.2 160.9 201.0 163.9 204.9 C166.8 208.7 169.5 214.1 172.8 217.4 C176.1 220.6 179.3 222.4 183.5 224.5 C187.6 226.6 193.0 228.4 197.8 229.9 C202.5 231.3 206.7 232.4 212.0 233.4 C217.4 234.5 223.9 235.5 229.9 236.1 C235.8 236.7 240.0 236.7 247.7 237.0 C255.4 237.3 268.6 237.7 276.2 237.9 C283.9 238.0 278.9 237.9 293.7 237.9 C308.5 237.9 335.3 237.7 365.0 237.9 C394.7 238.0 443.5 238.3 472.0 238.8 C500.6 239.2 525.5 240.3 536.2 240.6" fill="none" stroke="#4088dc" stroke-width="2"/>
</g>
<path d="M2297.5 137V169H2262" fill="none" stroke="#575757" stroke-width="1.5"/>
<path d="M2279 142C2284 146 2292 152 2292 158C2292 162 2286 163.5 2279 163.5C2272 163.5 2266 162 2266 158C2266 152 2274 146 2279 142Z" fill="#000"/>
<path d="M2764.3 137V169H2800" fill="none" stroke="#575757" stroke-width="1.5"/>
<path d="M2783 142C2788 146 2796.4 152 2796.4 158C2796.4 162 2790 163.5 2783 163.5C2776 163.5 2769.7 162 2769.7 158C2769.7 152 2778 146 2783 142Z" fill="#000"/>
</svg>
<!--/SVG1-->
<!--PRESETLIST-->
<div class="a" style="left:2262px;top:614px;width:538px;height:832px;overflow:hidden">
<svg class="a" style="left:0;top:0" width="538" height="832">
<path d="M15 33H34L24.5 50Z" fill="#d6d6d6"/>
<path d="M17.7 343.0L33.6 352.5L17.7 362.0Z" fill="#d6d6d6"/>
<path d="M17.7 391.0L33.6 400.5L17.7 410.0Z" fill="#d6d6d6"/>
<path d="M17.7 439.0L33.6 448.5L17.7 458.0Z" fill="#d6d6d6"/>
<path d="M17.7 487.0L33.6 496.5L17.7 506.0Z" fill="#d6d6d6"/>
<path d="M17.7 535.0L33.6 544.5L17.7 554.0Z" fill="#d6d6d6"/>
<path d="M17.7 583.0L33.6 592.5L17.7 602.0Z" fill="#d6d6d6"/>
<path d="M17.7 631.0L33.6 640.5L17.7 650.0Z" fill="#d6d6d6"/>
<path d="M17.7 679.0L33.6 688.5L17.7 698.0Z" fill="#d6d6d6"/>
<path d="M17.7 727.0L33.6 736.5L17.7 746.0Z" fill="#d6d6d6"/>
<path d="M17.7 775.0L33.6 784.5L17.7 794.0Z" fill="#d6d6d6"/>
<path d="M17.7 823.0L33.6 832.5L17.7 842.0Z" fill="#d6d6d6"/>
<rect x="0" y="310.6" width="510" height="2" fill="#2e2e2e"/>
<rect x="510" y="0" width="28" height="832" fill="#444"/>
<rect x="514" y="7" width="22" height="184" rx="11" fill="#7b7b7b"/>
</svg>
<div class="t ps" style="left:48px;top:30px">User Presets</div>
<div class="t pu" style="left:86.5px;top:76.0px">Copenhagen Kayakers Sunset</div>
<div class="t pu" style="left:86.5px;top:121.8px">Haarlem Bike Canal Scene</div>
<div class="t pu" style="left:86.5px;top:167.6px">Haarlem Canal + Bike</div>
<div class="t pu" style="left:86.5px;top:213.4px">NYC Street</div>
<div class="t pu" style="left:86.5px;top:259.2px">Stockholm 2018</div>
<div class="t ps" style="left:48.5px;top:342.0px">Adaptive: Portrait</div>
<div class="t ps" style="left:48.5px;top:390.0px">Adaptive: Sky</div>
<div class="t ps" style="left:48.5px;top:438.0px">Adaptive: Subject</div>
<div class="t ps" style="left:48.5px;top:486.0px">Adaptive: Blur Background</div>
<div class="t ps" style="left:48.5px;top:534.0px">Portraits: Deep Skin</div>
<div class="t ps" style="left:48.5px;top:582.0px">Portraits: Medium Skin</div>
<div class="t ps" style="left:48.5px;top:630.0px">Portraits: Light Skin</div>
<div class="t ps" style="left:48.5px;top:678.0px">Portraits: Black &amp; White</div>
<div class="t ps" style="left:48.5px;top:726.0px">Portraits: Edgy</div>
<div class="t ps" style="left:48.5px;top:774.0px">Portraits: Group</div>
<div class="t ps" style="left:48.5px;top:822.0px">Auto+: Retro</div>
</div>
<!--/PRESETLIST-->
<!--SVG2-->
<svg class="a" style="left:0;top:0;z-index:5" width="2880" height="1568" viewBox="0 0 2880 1568">
<defs>
<pattern id="ck" width="3.4" height="3.4" patternUnits="userSpaceOnUse" x="0" y="0"><rect width="3.4" height="3.4" fill="#2a2a2a"/><rect width="1.7" height="1.7" fill="#cfcfcf"/><rect x="1.7" y="1.7" width="1.7" height="1.7" fill="#cfcfcf"/></pattern>
<pattern id="ck3" width="4" height="4" patternUnits="userSpaceOnUse"><rect width="4" height="4" fill="#444"/><rect width="2" height="2" fill="#b4b4b4"/><rect x="2" y="2" width="2" height="2" fill="#b4b4b4"/></pattern>
<clipPath id="mc"><circle cx="2836.5" cy="517.5" r="11.9"/></clipPath>
<clipPath id="mk"><circle cx="2840" cy="380.5" r="14.5"/></clipPath>
</defs>
<!-- presets header icons -->
<path d="M2674.5 463.5H2693.5V482H2682.5L2674.5 474Z M2674.5 474H2682.5V482" fill="none" stroke="#e2e2e2" stroke-width="2"/>
<g fill="#d8d8d8"><circle cx="2728.3" cy="474" r="3.4"/><circle cx="2736.3" cy="474" r="3.4"/><circle cx="2744.3" cy="474" r="3.4"/></g>
<rect x="2687.2" y="535.5" width="81.8" height="32.6" fill="#4a4a4a" stroke="#5e5e5e" stroke-width="1.5"/>
<rect x="2285" y="579" width="490" height="7" rx="3.5" fill="#747474"/>
<!-- toolbar: sliders -->
<g stroke="#d4d4d4" stroke-width="2" fill="none">
 <path d="M2823.7 164.8H2856.4M2823.7 174.9H2856.4M2823.7 185.1H2856.4"/>
</g>
<g stroke="#d4d4d4" stroke-width="2.2" fill="#535353">
 <circle cx="2832.6" cy="164.8" r="4.6"/><circle cx="2847" cy="174.9" r="4.6"/><circle cx="2836.8" cy="185.1" r="4.6"/>
</g>
<!-- crop -->
<path d="M2832.3 235.5H2847.8L2851.5 252.9H2828.5Z" fill="none" stroke="#c8c8c8" stroke-width="2.6"/>
<g fill="#c8c8c8"><circle cx="2832.3" cy="235.5" r="3.8"/><circle cx="2847.8" cy="235.5" r="3.8"/><circle cx="2851.5" cy="252.9" r="3.8"/><circle cx="2828.5" cy="252.9" r="3.8"/></g>
<!-- eraser -->
<path fill="#cdcdcd" fill-rule="evenodd" d="M2843.8 295.7L2858.5 310.4L2846.2 322.7H2859V327H2831.4L2821.8 317.4Z M2828.3 317.4L2835.6 310.2L2843.3 317.9L2838.6 322.6H2833.5Z"/>
<!-- masking -->
<circle cx="2840" cy="380.5" r="14" fill="url(#ck3)"/>
<circle cx="2840" cy="380.5" r="14.6" fill="none" stroke="#cdcdcd" stroke-width="3.4" stroke-dasharray="5.2 2.85" stroke-dashoffset="1.5"/>
<path d="M2851.3 398.4L2858.9 391V398.4Z" fill="#cdcdcd"/>
<!-- red eye -->
<path d="M2821.4 436.4H2836M2828.6 429V444" stroke="#d0d0d0" stroke-width="2.2"/>
<path d="M2827.3 453C2832 445 2837.5 441.5 2843.2 441.5C2849 441.5 2854.4 445 2859.1 453C2854.4 461 2849 464.5 2843.2 464.5C2837.5 464.5 2832 461 2827.3 453Z" fill="#cfcfcf"/>
<circle cx="2843.2" cy="453" r="9" fill="#535353"/>
<circle cx="2843.2" cy="453" r="5.9" fill="#cfcfcf"/>
<circle cx="2845.6" cy="450.6" r="2.2" fill="#535353"/>
<!-- presets selected -->
<rect x="2815.5" y="491.3" width="51" height="43.3" rx="4" fill="#353535" stroke="#5f5f5f" stroke-width="1.5"/>
<circle cx="2836.5" cy="517.5" r="11.9" fill="#bdbdbd"/>
<circle cx="2845.7" cy="507.9" r="11.6" fill="#353535" stroke="#bdbdbd" stroke-width="2"/>
<circle cx="2845.7" cy="507.9" r="11.6" fill="url(#ck)" clip-path="url(#mc)"/>
<!-- dots -->
<g fill="#d2d2d2"><circle cx="2829.5" cy="574" r="4.4"/><circle cx="2841.7" cy="574" r="4.4"/><circle cx="2854" cy="574" r="4.4"/></g>
<!-- zoom -->
<circle cx="2836.2" cy="1182" r="11.6" fill="none" stroke="#d6d6d6" stroke-width="2.4"/>
<path d="M2837 1174.5A7.5 7.5 0 0 1 2843.5 1181" fill="none" stroke="#d6d6d6" stroke-width="2"/>
<path d="M2845 1191L2855 1201" stroke="#d6d6d6" stroke-width="3.2" stroke-linecap="round"/>
<!-- hand -->
<g fill="#d8d8d8">
 <rect x="2831.6" y="1242.5" width="4.2" height="20" rx="2.1"/>
 <rect x="2837.6" y="1238" width="4.2" height="22" rx="2.1"/>
 <rect x="2843.6" y="1239.5" width="4.2" height="22" rx="2.1"/>
 <rect x="2849.6" y="1244.5" width="4.2" height="18" rx="2.1"/>
 <path d="M2831.6 1254H2853.8V1258C2853.8 1265 2849 1270.3 2842 1270.3C2837 1270.3 2834 1268 2831 1264.5L2825.3 1256C2824.3 1254.4 2825.6 1252.8 2827.3 1253.6C2829 1254.4 2830.5 1256 2831.6 1257Z"/>
</g>
<rect x="2812" y="1294" width="56" height="2" fill="#3a3a3a"/>
<!-- sampler box -->
<rect x="2815.5" y="1311.5" width="49" height="49.5" rx="4" fill="#353535" stroke="#5f5f5f" stroke-width="1.5"/>
<g stroke="#c4c4c4" fill="none" stroke-width="2">
 <circle cx="2830.7" cy="1326.7" r="5"/>
 <path d="M2830.7 1317.2V1321.5M2830.7 1331.9V1336.2M2821.2 1326.7H2825.5M2835.9 1326.7H2840.2"/>
</g>
<g transform="translate(2844.5 1336) rotate(-45)">
 <rect x="-21.5" y="-3.2" width="22" height="6.4" rx="3.2" fill="none" stroke="#c4c4c4" stroke-width="2.2"/>
 <rect x="-1" y="-6.5" width="5.5" height="13" rx="1" fill="#c4c4c4"/>
 <rect x="4" y="-4.8" width="15" height="9.6" rx="4.8" fill="#c4c4c4"/>
</g>
<!-- grid box -->
<rect x="2815.5" y="1379.5" width="49" height="49" rx="4" fill="#353535" stroke="#5f5f5f" stroke-width="1.5"/>
<path d="M2824.9 1388.7H2855.4V1419.2H2824.9Z M2835.1 1388.7V1419.2M2845.2 1388.7V1419.2M2824.9 1398.9H2855.4M2824.9 1409H2855.4" fill="none" stroke="#c4c4c4" stroke-width="2"/>
<!-- zoom bar icons -->
<path d="M312.5 1405.5L318.7 1411.7L324.9 1405.5" fill="none" stroke="#cfcfcf" stroke-width="2"/>
<rect x="2107.4" y="1395.4" width="25" height="25" rx="2.5" fill="#c4c4c4"/>
<path d="M2131 1427L2139 1419V1427Z" fill="#c4c4c4"/>
<rect x="2158" y="1380" width="2" height="55.6" fill="#333"/>
<path d="M2192.8 1395.2H2183.2V1420.5H2192.8" fill="none" stroke="#7e7e7e" stroke-width="3"/>
<rect x="2196.2" y="1389.5" width="2.6" height="36.5" fill="#7e7e7e"/>
<rect x="2202" y="1393.7" width="12.6" height="28.3" fill="#7e7e7e"/>
<!-- OK button -->
<rect x="2691.9" y="1480" width="136.5" height="51.6" rx="25.8" fill="none" stroke="#e6e6e6" stroke-width="2"/>
</svg>
<!--/SVG2-->
<div class="t" style="left:2548px;top:1492.5px;font-size:27px">Cancel</div>
<div class="t" style="left:2741px;top:1491.5px;font-size:27px">OK</div>
<div id="frame"></div>
</body></html>
